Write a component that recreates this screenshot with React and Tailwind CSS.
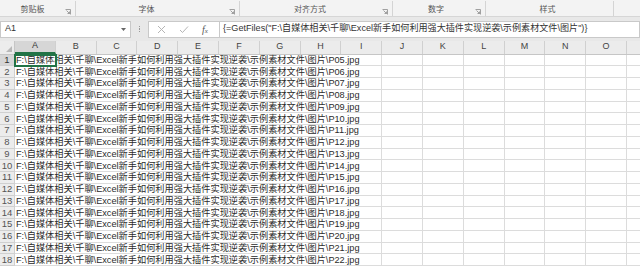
import React from "react";

const font = { fontFamily: '"Liberation Sans", "Noto Sans CJK SC", sans-serif' };

const groups = [
  { label: "剪贴板", w: "w-[76px]", launcher: true, pr: "pr-[10px]" },
  { label: "字体", w: "w-[164px]", launcher: true, pr: "pr-[22px]" },
  { label: "对齐方式", w: "w-[153px]", launcher: true, pr: "pr-[12px]" },
  { label: "数字", w: "w-[93px]", launcher: true, pr: "pr-[6px]" },
  { label: "样式", w: "w-[128px]", launcher: false, pr: "pr-[4px]" },
];

const cols = ["A", "B", "C", "D", "E", "F", "G", "H", "I", "J", "K", "L", "M", "N", "O", ""];

const Launcher = () => (
  <svg width="6" height="6" viewBox="0 0 6 6" className="absolute right-[4px] top-[8px]">
    <path d="M0.5 0.5 H5.5 V5.5" fill="none" stroke="#8a8a8a" strokeWidth="0.8" />
    <path d="M1.5 1.5 L4.5 4.5 M4.5 2.5 V4.5 H2.5" fill="none" stroke="#8a8a8a" strokeWidth="0.8" />
  </svg>
);

const Ribbon = () => (
  <div className="flex h-[17px] bg-[#f3f3f3] border-b border-[#d6d6d6]">
    {groups.map((g) => (
      <div
        key={g.label}
        className={`relative ${g.w} flex items-center justify-center ${g.pr} border-r border-[#d4d4d4] h-[15px] mt-[1px]`}
      >
        <span className="text-[8px] text-[#555] mt-[3px]">{g.label}</span>
        {g.launcher && <Launcher />}
      </div>
    ))}
  </div>
);

const FormulaBar = () => (
  <div className="flex items-stretch h-[24px] bg-[#e8e8e8] py-[3px]">
    <div className="w-[131px] bg-white border border-[#c9c9c9] flex items-center justify-between px-[4px]">
      <span className="text-[9px] text-[#333]">A1</span>
      <svg width="5" height="3" viewBox="0 0 5 3">
        <path d="M0 0 H5 L2.5 3 Z" fill="#666" />
      </svg>
    </div>
    <div className="w-[17px] flex flex-col items-center justify-center gap-[1px]">
      <span className="w-[1.5px] h-[1.5px] bg-[#9a9a9a]" />
      <span className="w-[1.5px] h-[1.5px] bg-[#9a9a9a]" />
      <span className="w-[1.5px] h-[1.5px] bg-[#9a9a9a]" />
    </div>
    <div className="w-[71px] bg-white border-y border-l border-[#c9c9c9] flex items-center pl-[8px] gap-[13px]">
      <svg width="9" height="9" viewBox="0 0 9 9">
        <path d="M1 1 L8 8 M8 1 L1 8" stroke="#b5b5b5" strokeWidth="1" />
      </svg>
      <svg width="10" height="9" viewBox="0 0 10 9">
        <path d="M1 5 L3.5 7.5 L9 1.5" fill="none" stroke="#b5b5b5" strokeWidth="1" />
      </svg>
      <span className="text-[10px] italic text-[#555]" style={{ fontFamily: '"Liberation Serif", serif' }}>
        f<span className="text-[7px]">x</span>
      </span>
    </div>
    <div className="flex-1 bg-white border border-[#c9c9c9] flex items-center pl-[3px] overflow-hidden">
      <span className="text-[9.1px] text-[#333] whitespace-nowrap">
        {'{=GetFiles("F:\\自媒体相关\\千聊\\Excel新手如何利用强大插件实现逆袭\\示例素材文件\\图片")}'}
      </span>
    </div>
  </div>
);

const HeaderRow = () => (
  <div className="flex h-[14px] bg-[#ececec] border-b border-[#c6c6c6]">
    <div className="w-[15px] shrink-0 border-r border-[#c6c6c6] relative">
      <svg width="6" height="6" viewBox="0 0 6 6" className="absolute right-[2px] bottom-[2px]">
        <path d="M6 0 V6 H0 Z" fill="#b9b9b9" />
      </svg>
    </div>
    {cols.map((c, i) => (
      <div
        key={i}
        className={`w-[40.8px] shrink-0 flex items-center justify-center text-[9px] border-r border-[#d0d0d0] ${
          i === 0 ? "bg-[#d6d6d6] text-[#333] border-b-2 border-b-[#217346]" : "text-[#444]"
        }`}
      >
        {c}
      </div>
    ))}
  </div>
);

const Row = ({ n }) => {
  const p = String(n + 4).padStart(2, "0");
  return (
    <div className="flex h-[11.75px] shrink-0">
      <div
        className={`w-[15px] shrink-0 flex items-center justify-center text-[9.5px] border-r border-b border-[#d0d0d0] ${
          n === 1 ? "bg-[#d6d6d6] text-[#333]" : "bg-[#ececec] text-[#555]"
        }`}
      >
        {n}
      </div>
      <div className="w-[367.2px] shrink-0 relative border-r border-b border-[#dcdcdc] flex items-center pl-[1px]">
        {n === 1 && (
          <div className="absolute left-[-1px] top-[-1px] w-[42.8px] h-[13.75px] border-2 border-[#217346]" />
        )}
        <span className="text-[9.2px] text-[#2b2b2b] whitespace-nowrap leading-none mt-[1px]">
          {`F:\\自媒体相关\\千聊\\Excel新手如何利用强大插件实现逆袭\\示例素材文件\\图片\\P${p}.jpg`}
        </span>
      </div>
      {[0, 1, 2, 3, 4, 5, 6].map((k) => (
        <div key={k} className="w-[40.8px] shrink-0 border-r border-b border-[#dcdcdc]" />
      ))}
    </div>
  );
};

export default function App() {
  return (
    <div className="w-[640px] h-[266px] overflow-hidden bg-white flex flex-col" style={font}>
      <Ribbon />
      <div className="h-[3px] bg-[#e8e8e8]" />
      <FormulaBar />
      <HeaderRow />
      <div className="flex flex-col">
        {Array.from({ length: 18 }, (_, i) => (
          <Row key={i} n={i + 1} />
        ))}
      </div>
    </div>
  );
}
